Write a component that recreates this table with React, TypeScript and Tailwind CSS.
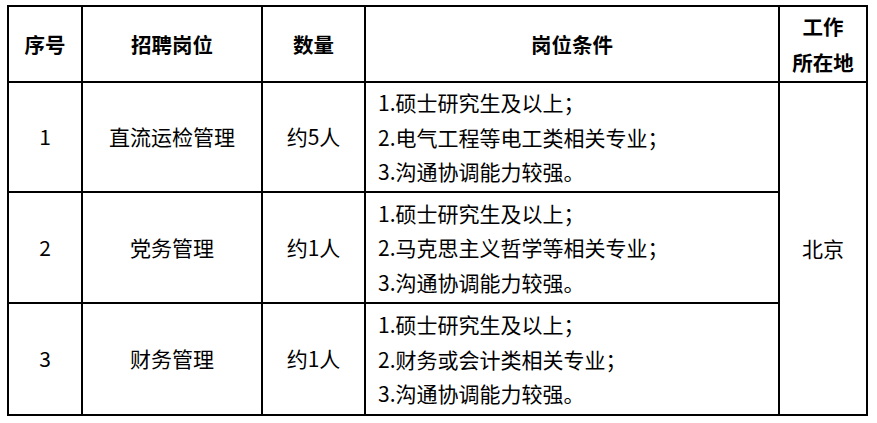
import React from "react";

const font = { fontFamily: '"Noto Sans CJK SC", "Noto Sans", sans-serif' };

const rows = [
  {
    no: "1",
    name: "直流运检管理",
    count: "约5人",
    req: ["1.硕士研究生及以上；", "2.电气工程等电工类相关专业；", "3.沟通协调能力较强。"],
  },
  {
    no: "2",
    name: "党务管理",
    count: "约1人",
    req: ["1.硕士研究生及以上；", "2.马克思主义哲学等相关专业；", "3.沟通协调能力较强。"],
  },
  {
    no: "3",
    name: "财务管理",
    count: "约1人",
    req: ["1.硕士研究生及以上；", "2.财务或会计类相关专业；", "3.沟通协调能力较强。"],
  },
];

export default function App() {
  return (
    <div className="w-[877px] h-[423px] bg-white pl-[7px] pt-[5px]" style={font}>
      <div className="inline-grid grid-cols-[72px_178px_101px_412px_86px] grid-rows-[74px_108px_109px_110px] gap-[2px] p-[2px] bg-black text-black text-[21px]">
        <div className="bg-white flex items-center justify-center font-bold text-[20.5px]">序号</div>
        <div className="bg-white flex items-center justify-center font-bold text-[20.5px]">招聘岗位</div>
        <div className="bg-white flex items-center justify-center font-bold text-[20.5px]">数量</div>
        <div className="bg-white flex items-center justify-center font-bold text-[20.5px]">岗位条件</div>
        <div className="bg-white flex flex-col items-center justify-center font-bold text-[20.5px] leading-[36px]">
          <span>工作</span>
          <span>所在地</span>
        </div>
        {rows.map((r, i) => (
          <React.Fragment key={r.no}>
            <div className="bg-white flex items-center justify-center">{r.no}</div>
            <div className="bg-white flex items-center justify-center">{r.name}</div>
            <div className="bg-white flex items-center justify-center">{r.count}</div>
            <div className="bg-white flex flex-col justify-center pl-[12px] leading-[34.5px]">
              {r.req.map((t) => (
                <span key={t}>{t}</span>
              ))}
            </div>
            {i === 0 && (
              <div className="bg-white row-span-3 flex items-center justify-center">北京</div>
            )}
          </React.Fragment>
        ))}
      </div>
    </div>
  );
}
